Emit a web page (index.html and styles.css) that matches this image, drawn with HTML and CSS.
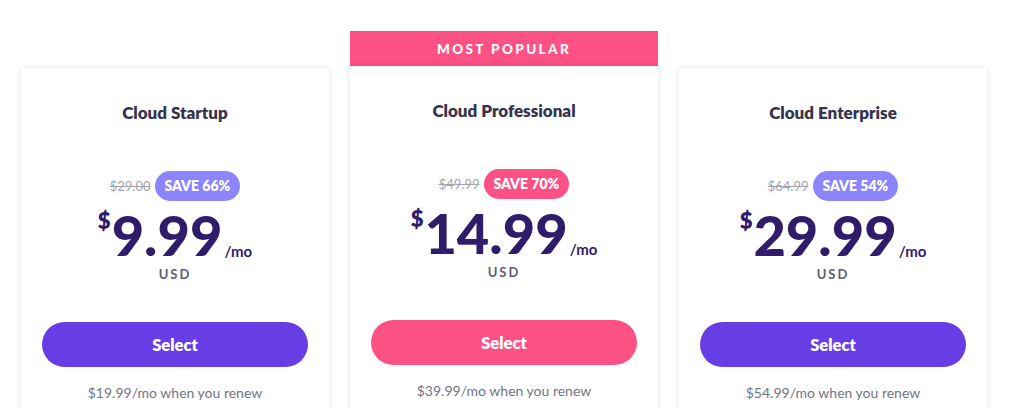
FILE: index.html
```html
<!DOCTYPE html>
<html>
<head>
<meta charset="utf-8">
<link rel="stylesheet" href="styles.css">
</head>
<body>
<div class="plans">
  <div class="plan">
    <div class="card">
      <h3 class="title">Cloud Startup</h3>
      <div class="deal"><span class="old">$29.00</span><span class="save">SAVE 66%</span></div>
      <div class="price"><span class="cur">$</span><span class="amt">9.99</span><span class="per">/mo</span></div>
      <div class="usd">USD</div>
      <button class="btn">Select</button>
      <div class="renew">$19.99/mo when you renew</div>
    </div>
  </div>
  <div class="plan popular">
    <div class="ribbon">MOST POPULAR</div>
    <div class="card">
      <h3 class="title">Cloud Professional</h3>
      <div class="deal"><span class="old">$49.99</span><span class="save">SAVE 70%</span></div>
      <div class="price"><span class="cur">$</span><span class="amt">14.99</span><span class="per">/mo</span></div>
      <div class="usd">USD</div>
      <button class="btn">Select</button>
      <div class="renew">$39.99/mo when you renew</div>
    </div>
  </div>
  <div class="plan">
    <div class="card">
      <h3 class="title">Cloud Enterprise</h3>
      <div class="deal"><span class="old">$64.99</span><span class="save">SAVE 54%</span></div>
      <div class="price"><span class="cur">$</span><span class="amt">29.99</span><span class="per">/mo</span></div>
      <div class="usd">USD</div>
      <button class="btn">Select</button>
      <div class="renew">$54.99/mo when you renew</div>
    </div>
  </div>
</div>
</body>
</html>
```

FILE: styles.css
```css
html, body {
  margin: 0;
  padding: 0;
  background: #ffffff;
  height: 408px;
  overflow: hidden;
}
body {
  font-family: "Lato", "Open Sans", sans-serif;
}
.plans {
  display: flex;
  gap: 21px;
  padding: 31px 0 0 21px;
  align-items: flex-start;
}
.plan {
  width: 308px;
  margin-top: 37px;
  display: flex;
  flex-direction: column;
}
.plan.popular {
  margin-top: 0;
}
.ribbon {
  height: 35px;
  background: #fc5185;
  color: #fff;
  font-weight: 900;
  font-size: 13.5px;
  letter-spacing: 2.4px;
  display: flex;
  align-items: center;
  justify-content: center;
}
.card {
  background: #fff;
  border-radius: 4px;
  box-shadow: 0 0 6px rgba(30, 30, 60, 0.12);
  height: 400px;
  display: flex;
  flex-direction: column;
  align-items: center;
  padding-top: 35px;
  box-sizing: border-box;
}
.popular .card {
  border-radius: 0 0 4px 4px;
}
.title {
  margin: 0;
  font-size: 17px;
  line-height: 20px;
  font-weight: 800;
  color: #36344d;
}
.deal {
  margin-top: 48px;
  display: flex;
  align-items: center;
  gap: 4px;
  height: 30px;
}
.old {
  font-size: 13px;
  color: #a3a3ad;
  text-decoration: line-through;
}
.save {
  height: 30px;
  line-height: 30px;
  border-radius: 15px;
  padding: 0 10px;
  background: #8c85ff;
  color: #fff;
  font-size: 14px;
  font-weight: 800;
}
.popular .save {
  background: #fc5185;
}
.price {
  margin-top: 9px;
  display: flex;
  align-items: flex-end;
  color: #2f1c6a;
  height: 50px;
}
.cur {
  font-size: 22px;
  font-weight: 800;
  align-self: flex-start;
  line-height: 22px;
  margin-top: 0;
  margin-right: 1px;
}
.amt {
  font-size: 56px;
  font-weight: 900;
  line-height: 50px;
}
.per {
  font-size: 15px;
  font-weight: 700;
  line-height: 18px;
  margin-left: 2px;
}
.usd {
  margin-top: 6px;
  font-size: 13px;
  font-weight: 700;
  letter-spacing: 2px;
  color: #5e5e70;
  line-height: 16px;
}
.btn {
  margin-top: 40px;
  width: 266px;
  height: 45px;
  border: none;
  border-radius: 23px;
  background: #673de6;
  color: #fff;
  font-family: inherit;
  font-size: 16.5px;
  font-weight: 800;
}
.popular .btn {
  background: #fc5185;
}
.renew {
  margin-top: 17px;
  font-size: 14px;
  color: #727586;
}
```
